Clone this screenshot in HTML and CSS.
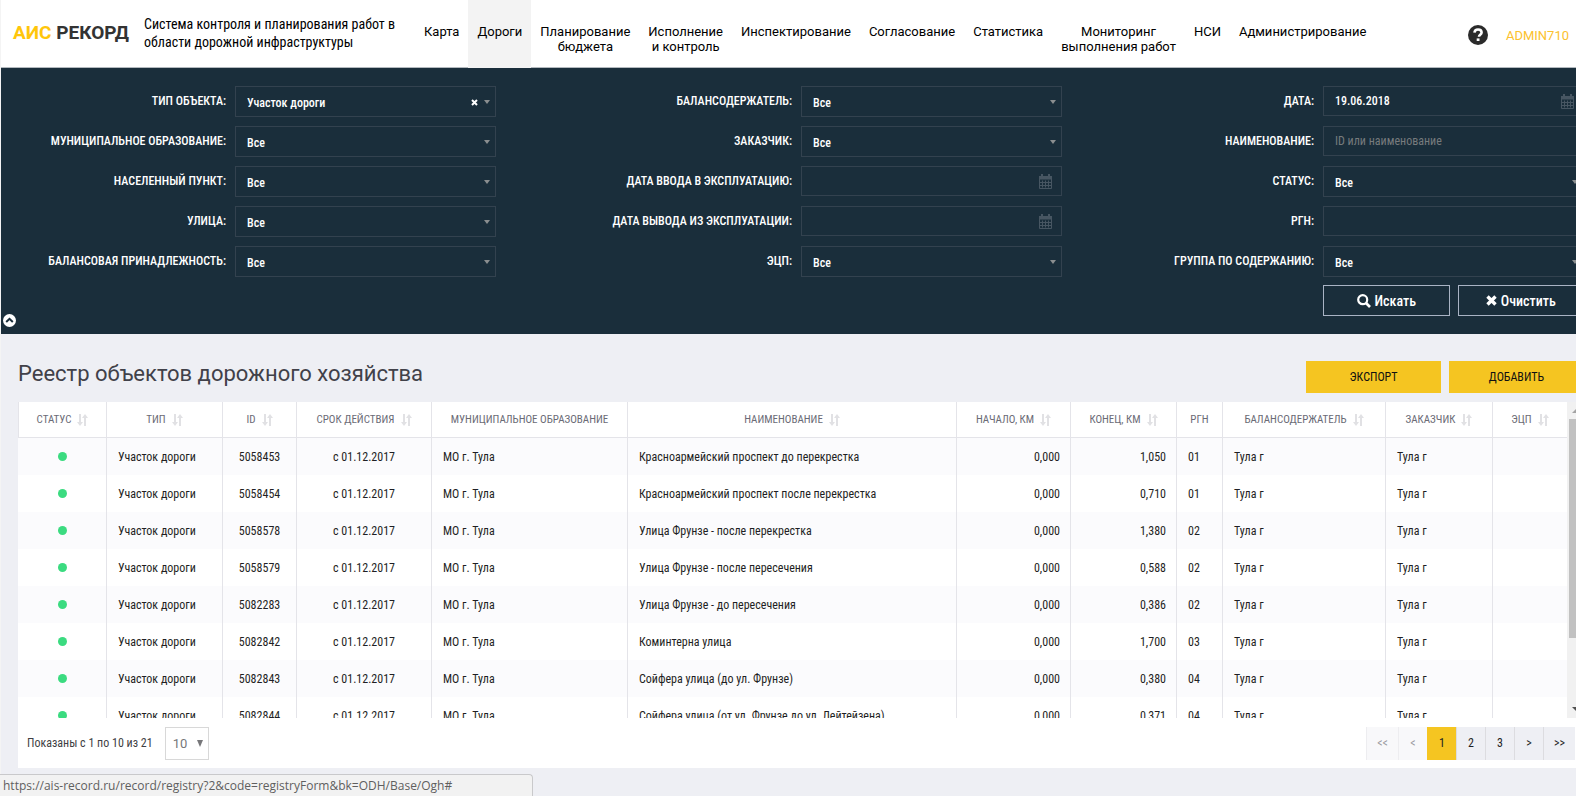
FILE: index.html
```html
<!DOCTYPE html>
<html lang="ru">
<head>
<meta charset="utf-8">
<title>АИС Рекорд</title>
<link rel="stylesheet" href="styles.css">
</head>
<body>
<svg class="sprite" aria-hidden="true">
  <symbol id="i-cal" viewBox="0 0 15 15"><path d="M1.500 2.500h12v12h-12zM1.500 5h12M4.500 6.500v7M7.500 6.500v7M10.500 6.500v7M2 8.500h11M2 11.500h11" fill="none" stroke="currentColor"/><path d="M1 2h13v3H1zM3 0h2v3H3zM10 0h2v3h-2z" fill="currentColor"/></symbol>
  <symbol id="i-sort" viewBox="0 0 11 12"><path d="M2 0h2v8h2L3 12 0 8h2zM7 12V4H5l3-4 3 4H9v8z" fill="currentColor"/></symbol>
</svg>

<header class="top">
  <a class="logo" href="#"><span class="logo-ais">АИС</span> <span>РЕКОРД</span></a>
  <p class="tagline">Система контроля и планирования работ в<br>области дорожной инфраструктуры</p>
  <nav class="nav">
    <a href="#">Карта</a>
    <a href="#" class="active">Дороги</a>
    <a href="#">Планирование<br>бюджета</a>
    <a href="#">Исполнение<br>и контроль</a>
    <a href="#">Инспектирование</a>
    <a href="#">Согласование</a>
    <a href="#">Статистика</a>
    <a href="#">Мониторинг<br>выполнения работ</a>
    <a href="#">НСИ</a>
    <a href="#">Администрирование</a>
  </nav>
  <a class="help" href="#" aria-label="Помощь"><svg width="20" height="20" viewBox="0 0 20 20"><circle cx="10" cy="10" r="10" fill="#2b2b2b"/><path d="M6.400 7.600C6.700 5.200 8.200 4.500 10 4.500c2.200 0 3.600 1.200 3.600 3 0 2.300-2.600 2.300-2.600 4.200" fill="none" stroke="#fff" stroke-width="2.600"/><path d="M8.700 13.400h2.800v2.600H8.700z" fill="#fff"/></svg></a>
  <a class="user" href="#">ADMIN710</a>
</header>

<form class="filters">
  <div class="grid">
    <label for="f1">ТИП ОБЪЕКТА:</label>
    <div class="field sel"><select id="f1"><option>Участок дороги</option></select><button type="button" class="clear" aria-label="Сбросить"><svg width="7" height="7" viewBox="0 0 7 7"><path d="M1 1l5 5M6 1L1 6" stroke="#fff" stroke-width="2"/></svg></button></div>
    <label for="f2">БАЛАНСОДЕРЖАТЕЛЬ:</label>
    <div class="field sel"><select id="f2"><option>Все</option></select></div>
    <label for="f3">ДАТА:</label>
    <div class="field"><input id="f3" type="text" value="19.06.2018"><svg class="cal"><use href="#i-cal"/></svg></div>

    <label for="f4">МУНИЦИПАЛЬНОЕ ОБРАЗОВАНИЕ:</label>
    <div class="field sel"><select id="f4"><option>Все</option></select></div>
    <label for="f5">ЗАКАЗЧИК:</label>
    <div class="field sel"><select id="f5"><option>Все</option></select></div>
    <label for="f6">НАИМЕНОВАНИЕ:</label>
    <div class="field"><input id="f6" type="text" placeholder="ID или наименование"></div>

    <label for="f7">НАСЕЛЕННЫЙ ПУНКТ:</label>
    <div class="field sel"><select id="f7"><option>Все</option></select></div>
    <label for="f8">ДАТА ВВОДА В ЭКСПЛУАТАЦИЮ:</label>
    <div class="field"><input id="f8" type="text"><svg class="cal"><use href="#i-cal"/></svg></div>
    <label for="f9">СТАТУС:</label>
    <div class="field sel"><select id="f9"><option>Все</option></select></div>

    <label for="f10">УЛИЦА:</label>
    <div class="field sel"><select id="f10"><option>Все</option></select></div>
    <label for="f11">ДАТА ВЫВОДА ИЗ ЭКСПЛУАТАЦИИ:</label>
    <div class="field"><input id="f11" type="text"><svg class="cal"><use href="#i-cal"/></svg></div>
    <label for="f12">РГН:</label>
    <div class="field"><input id="f12" type="text"></div>

    <label for="f13">БАЛАНСОВАЯ ПРИНАДЛЕЖНОСТЬ:</label>
    <div class="field sel"><select id="f13"><option>Все</option></select></div>
    <label for="f14">ЭЦП:</label>
    <div class="field sel"><select id="f14"><option>Все</option></select></div>
    <label for="f15">ГРУППА ПО СОДЕРЖАНИЮ:</label>
    <div class="field sel"><select id="f15"><option>Все</option></select></div>

    <div class="actions">
      <button type="button"><svg width="14" height="14" viewBox="0 0 14 14"><circle cx="5.700" cy="5.700" r="4.500" fill="none" stroke="#fff" stroke-width="2.200"/><path d="M9 9l4 4" stroke="#fff" stroke-width="2.600"/></svg>Искать</button>
      <button type="button"><svg width="11" height="11" viewBox="0 0 11 11"><path d="M1.500 1.500l8 8M9.500 1.500l-8 8" stroke="#fff" stroke-width="3.400"/></svg>Очистить</button>
    </div>
  </div>
  <button type="button" class="collapse" aria-label="Свернуть"><svg width="13" height="13" viewBox="0 0 13 13"><circle cx="6.500" cy="6.500" r="6.500" fill="#fff"/><path d="M3.200 8l3.300-3.200L9.800 8" fill="none" stroke="#1a2e3b" stroke-width="2"/></svg></button>
</form>

<main class="main">
  <div class="head">
    <h1>Реестр объектов дорожного хозяйства</h1>
    <div class="head-actions"><button type="button">ЭКСПОРТ</button><button type="button">ДОБАВИТЬ</button></div>
  </div>
  <section class="card">
    <div class="scroll">
      <div class="table-wrap">
      <table>
        <colgroup><col class="w-status"><col class="w-type"><col class="w-id"><col class="w-date"><col class="w-mo"><col><col class="w-start"><col class="w-end"><col class="w-rgn"><col class="w-bal"><col class="w-cust"><col class="w-sign"></colgroup>
        <thead><tr>
          <th>СТАТУС<svg><use href="#i-sort"/></svg></th><th>ТИП<svg><use href="#i-sort"/></svg></th><th>ID<svg><use href="#i-sort"/></svg></th><th>СРОК ДЕЙСТВИЯ<svg><use href="#i-sort"/></svg></th><th>МУНИЦИПАЛЬНОЕ ОБРАЗОВАНИЕ</th><th>НАИМЕНОВАНИЕ<svg><use href="#i-sort"/></svg></th><th>НАЧАЛО, КМ<svg><use href="#i-sort"/></svg></th><th>КОНЕЦ, КМ<svg><use href="#i-sort"/></svg></th><th>РГН</th><th>БАЛАНСОДЕРЖАТЕЛЬ<svg><use href="#i-sort"/></svg></th><th>ЗАКАЗЧИК<svg><use href="#i-sort"/></svg></th><th>ЭЦП<svg><use href="#i-sort"/></svg></th>
        </tr></thead>
        <tbody>
          <tr><td class="c"><i class="dot"></i></td><td>Участок дороги</td><td class="c">5058453</td><td class="c">с 01.12.2017</td><td>МО г. Тула</td><td>Красноармейский проспект до перекрестка</td><td class="r">0,000</td><td class="r">1,050</td><td>01</td><td>Тула г</td><td>Тула г</td><td></td></tr>
          <tr><td class="c"><i class="dot"></i></td><td>Участок дороги</td><td class="c">5058454</td><td class="c">с 01.12.2017</td><td>МО г. Тула</td><td>Красноармейский проспект после перекрестка</td><td class="r">0,000</td><td class="r">0,710</td><td>01</td><td>Тула г</td><td>Тула г</td><td></td></tr>
          <tr><td class="c"><i class="dot"></i></td><td>Участок дороги</td><td class="c">5058578</td><td class="c">с 01.12.2017</td><td>МО г. Тула</td><td>Улица Фрунзе - после перекрестка</td><td class="r">0,000</td><td class="r">1,380</td><td>02</td><td>Тула г</td><td>Тула г</td><td></td></tr>
          <tr><td class="c"><i class="dot"></i></td><td>Участок дороги</td><td class="c">5058579</td><td class="c">с 01.12.2017</td><td>МО г. Тула</td><td>Улица Фрунзе - после пересечения</td><td class="r">0,000</td><td class="r">0,588</td><td>02</td><td>Тула г</td><td>Тула г</td><td></td></tr>
          <tr><td class="c"><i class="dot"></i></td><td>Участок дороги</td><td class="c">5082283</td><td class="c">с 01.12.2017</td><td>МО г. Тула</td><td>Улица Фрунзе - до пересечения</td><td class="r">0,000</td><td class="r">0,386</td><td>02</td><td>Тула г</td><td>Тула г</td><td></td></tr>
          <tr><td class="c"><i class="dot"></i></td><td>Участок дороги</td><td class="c">5082842</td><td class="c">с 01.12.2017</td><td>МО г. Тула</td><td>Коминтерна улица</td><td class="r">0,000</td><td class="r">1,700</td><td>03</td><td>Тула г</td><td>Тула г</td><td></td></tr>
          <tr><td class="c"><i class="dot"></i></td><td>Участок дороги</td><td class="c">5082843</td><td class="c">с 01.12.2017</td><td>МО г. Тула</td><td>Сойфера улица (до ул. Фрунзе)</td><td class="r">0,000</td><td class="r">0,380</td><td>04</td><td>Тула г</td><td>Тула г</td><td></td></tr>
          <tr><td class="c"><i class="dot"></i></td><td>Участок дороги</td><td class="c">5082844</td><td class="c">с 01.12.2017</td><td>МО г. Тула</td><td>Сойфера улица (от ул. Фрунзе до ул. Лейтейзена)</td><td class="r">0,000</td><td class="r">0,371</td><td>04</td><td>Тула г</td><td>Тула г</td><td></td></tr>
        </tbody>
      </table>
      </div>
      <div class="bar"><i class="up"></i><i class="thumb"></i><i class="down"></i></div>
    </div>
    <footer class="foot">
      <label for="size">Показаны с 1 по 10 из 21</label>
      <div class="size"><select id="size"><option>10</option></select></div>
      <nav class="pages"><button type="button" disabled>&lt;&lt;</button><button type="button" disabled>&lt;</button><button type="button" class="current">1</button><button type="button">2</button><button type="button">3</button><button type="button">&gt;</button><button type="button">&gt;&gt;</button></nav>
    </footer>
  </section>
</main>
<div class="status">https://ais-record.ru/record/registry?2&amp;code=registryForm&amp;bk=ODH/Base/Ogh#</div>
</body>
</html>
```

FILE: styles.css
```css
* { box-sizing: border-box; }
body {
  margin: 0;
  height: 100vh;
  overflow: hidden;
  display: flex;
  flex-direction: column;
  background: #eeeff4;
  border-left: 1px solid #f4f4f4;
  font: 12px/16px "Roboto Condensed", Roboto, sans-serif;
  color: #1f1f24;
}
button, input, select { font: inherit; color: inherit; margin: 0; }
a { color: inherit; text-decoration: none; }
.sprite { display: none; }

.top {
  display: flex;
  height: 68px;
  background: #fff;
  border-bottom: 1px solid #b3b9be;
  color: #000;
}
.logo {
  width: 143px;
  padding: 22px 0 0 12px;
  font: 700 19px/22px Roboto, sans-serif;
  color: #333;
  white-space: nowrap;
}
.logo-ais { color: #ffc60b; }
.tagline {
  margin: 0;
  width: 271px;
  padding-top: 15px;
  font-size: 14px;
  line-height: 18px;
  white-space: nowrap;
}
.nav {
  display: flex;
  flex: 1;
  font: 13px/15px Roboto, sans-serif;
  text-align: center;
  white-space: nowrap;
}
.nav a { padding: 24px 9px 0; }
.nav .active { background: #f3f3f3; margin-bottom: -1px; }
.help { padding: 25px 0 0; }
.help svg { display: block; }
.user {
  padding: 28px 7px 0 18px;
  font: 13px/16px Roboto, sans-serif;
  color: #fcc12d;
}

.filters {
  position: relative;
  height: 266px;
  padding-top: 18px;
  background: #1a2e3b;
  color: #fff;
  font-weight: 500;
}
.grid {
  display: grid;
  grid-template-columns: 234fr 261fr 305fr 261fr 261fr 261fr;
  grid-auto-rows: 31px;
  row-gap: 9px;
  margin-right: -8px;
}
.grid label {
  padding-right: 9px;
  line-height: 31px;
  text-align: right;
  white-space: nowrap;
}
.field { position: relative; }
.field input, .field select {
  width: 100%;
  height: 31px;
  padding: 2px 11px 0;
  border: 1px solid #33424f;
  border-radius: 0;
  background: transparent;
  appearance: none;
  outline: 0;
}
.field input { height: 30px; padding-top: 0; }
.field input::placeholder { color: #777b7d; font-weight: 400; opacity: 1; }
.sel::after {
  content: "";
  position: absolute;
  right: 6px;
  top: 14px;
  border: 3px solid transparent;
  border-top: 4px solid #8b8f90;
  border-bottom: 0;
}
.clear {
  position: absolute;
  right: 18px;
  top: 13px;
  padding: 0;
  border: 0;
  background: none;
  line-height: 0;
}
.cal {
  position: absolute;
  right: 9px;
  top: 8px;
  width: 15px;
  height: 15px;
  color: #475662;
}
.actions {
  grid-column: 6;
  display: flex;
  gap: 8px;
  height: 31px;
  margin-top: -1px;
}
.actions button {
  flex: 1;
  display: flex;
  align-items: center;
  justify-content: center;
  gap: 4px;
  padding: 0;
  border: 1px solid #a9b3c4;
  background: transparent;
  font-size: 14px;
}
.collapse {
  position: absolute;
  left: 2px;
  bottom: 7px;
  padding: 0;
  border: 0;
  background: none;
  line-height: 0;
}

.main {
  flex: 1;
  min-height: 0;
  display: flex;
  flex-direction: column;
  margin-right: -8px;
  padding: 27px 0 28px 17px;
}
.head { display: flex; justify-content: space-between; height: 41px; }
h1 {
  margin: 0;
  font: 400 22px/26px Roboto, sans-serif;
  color: #414149;
}
.head-actions { display: flex; gap: 8px; }
.head-actions button {
  width: 135px;
  height: 32px;
  border: 0;
  background: #f5c521;
  color: #111;
}
.card {
  flex: 1;
  min-height: 0;
  display: flex;
  flex-direction: column;
  background: #fff;
}
.scroll { flex: 1; min-height: 0; display: flex; overflow: hidden; }
.table-wrap { flex: 1; min-width: 0; }
table {
  width: 100%;
  table-layout: fixed;
  border-collapse: separate;
  border-spacing: 0;
}
.w-status { width: 88px; }
.w-type { width: 116px; }
.w-id { width: 74px; }
.w-date { width: 135px; }
.w-mo { width: 196px; }
.w-start { width: 114px; }
.w-end { width: 106px; }
.w-rgn { width: 46px; }
.w-bal { width: 163px; }
.w-cust { width: 107px; }
.w-sign { width: 75px; }
th, td {
  padding: 0 11px;
  border-left: 1px solid #e4e4e9;
  text-align: left;
  white-space: nowrap;
}
th {
  height: 36px;
  padding: 0;
  border-bottom: 1px solid #e4e4e9;
  font-size: 11px;
  font-weight: 400;
  color: #6b6b76;
  text-align: center;
}
th svg {
  width: 11px;
  height: 12px;
  margin-left: 6px;
  vertical-align: -3px;
  color: #e1e1e4;
}
td { height: 37px; }
td:first-child { border-left-color: transparent; }
tbody tr:nth-child(odd) { background: #fbfbfd; }
td.c { text-align: center; padding: 0; }
td.r { text-align: right; padding-right: 10px; }
.dot {
  display: block;
  width: 9px;
  height: 9px;
  margin: 0 auto;
  border-radius: 50%;
  background: #3bdb80;
}
.bar {
  width: 17px;
  display: flex;
  flex-direction: column;
  align-items: center;
  background: #f1f1f1;
}
.up, .down { border: 4px solid transparent; }
.up { border-top: 0; border-bottom-color: #a3a3a3; margin: 7px 0 6px; }
.down { border-bottom: 0; border-top-color: #505050; margin: auto 0 7px; }
.thumb { width: 13px; height: 219px; background: #c1c1c1; }

.foot {
  display: flex;
  align-items: center;
  height: 50px;
  padding: 0 9px;
  color: #3f3f44;
}
.size { position: relative; margin-left: 12px; }
.size select {
  display: block;
  width: 44px;
  height: 33px;
  padding: 2px 7px 0;
  border: 1px solid #d8d8d8;
  border-radius: 0;
  background: #fff;
  color: #77777a;
  appearance: none;
  font: 13px/16px Roboto, sans-serif;
}
.size::after {
  content: "";
  position: absolute;
  right: 6px;
  top: 13px;
  border: 3px solid transparent;
  border-top: 7px solid #77777a;
  border-bottom: 0;
}
.pages { display: flex; margin-left: auto; }
.pages button {
  min-width: 29px;
  height: 33px;
  padding: 0 10px;
  border: 0;
  border-left: 1px solid #dcdce0;
  background: #eeeff4;
  color: #1f1f24;
}
.pages button:disabled { background: #f8f8fa; color: #9a9aa0; border-color: #ededf0; }
.pages .current { background: #f5c521; border-color: #f5c521; }

.status {
  position: fixed;
  left: 0;
  bottom: 0;
  width: 533px;
  height: 22px;
  padding-left: 3px;
  border: 1px solid #c9c9cb;
  border-width: 1px 1px 0 0;
  border-radius: 0 4px 0 0;
  background: #f2f2f2;
  font: 12px/22px "Open Sans", sans-serif;
  color: #5f5f5f;
}
```
